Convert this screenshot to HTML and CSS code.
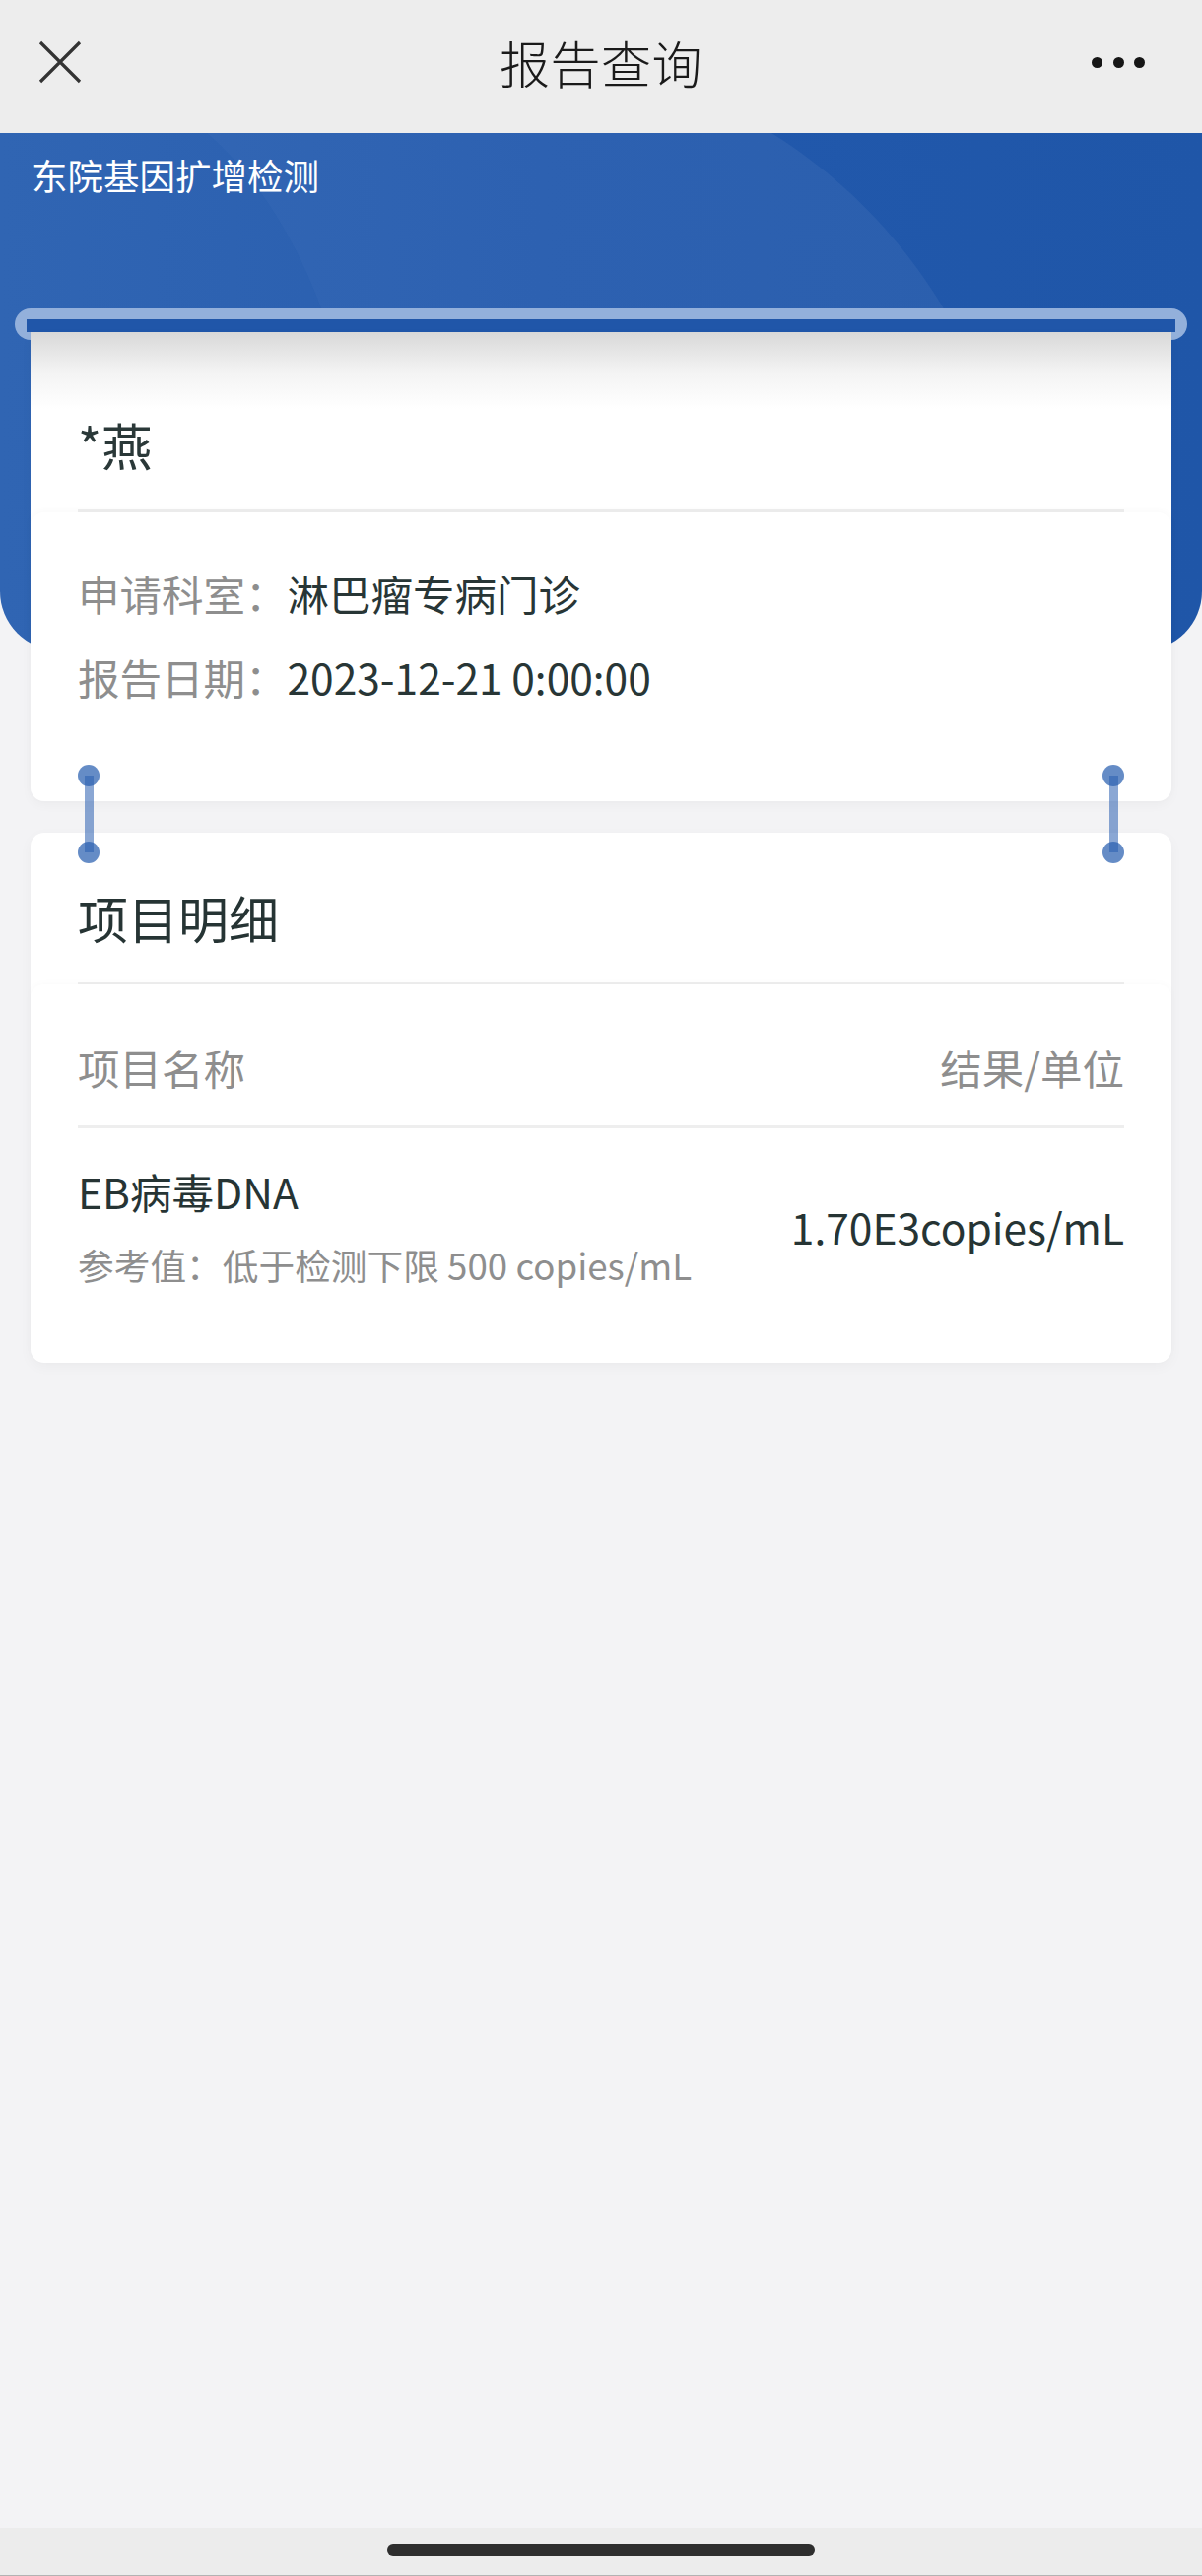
FILE: index.html
```html
<!DOCTYPE html>
<html lang="zh-CN">
<head>
<meta charset="utf-8">
<title>报告查询</title>
<link rel="stylesheet" href="styles.css">
</head>
<body>
<div class="app">
  <header class="navbar">
    <svg class="nav-close" width="44" height="44" viewBox="0 0 44 44" aria-hidden="true">
      <path d="M2 2 L42 42 M42 2 L2 42" stroke="#333" stroke-width="3.2" fill="none"/>
    </svg>
    <h1 class="nav-title">报告查询</h1>
    <div class="nav-more"><span></span><span></span><span></span></div>
  </header>

  <main class="main">
    <section class="hero">
      <svg class="hero-deco" viewBox="0 0 1220 525" preserveAspectRatio="none" aria-hidden="true">
        <path d="M0 0 H210 C300 80 370 220 388 525 H0 Z" fill="#ffffff" fill-opacity="0.035"/>
        <path d="M210 0 C300 80 370 220 388 525 H1062 C1040 300 960 110 783 0 Z" fill="#ffffff" fill-opacity="0.05"/>
        <path d="M240 525 C255 400 290 300 330 230 C362 320 380 420 388 525 Z" fill="#ffffff" fill-opacity="0.045"/>
      </svg>
      <div class="hero-title">东院基因扩增检测</div>
    </section>

    <section class="report">
      <div class="slot"><div class="slot-bar"></div></div>

      <div class="paper">
        <div class="paper-name">*燕</div>
        <div class="paper-info">
          <div class="info-row"><span class="info-label">申请科室：</span><span class="info-value">淋巴瘤专病门诊</span></div>
          <div class="info-row"><span class="info-label">报告日期：</span><span class="info-value">2023-12-21 0:00:00</span></div>
        </div>
      </div>

      <div class="detail">
        <div class="pin pin-left"><i class="pin-line"></i><i class="pin-dot pin-top"></i><i class="pin-dot pin-bottom"></i></div>
        <div class="pin pin-right"><i class="pin-line"></i><i class="pin-dot pin-top"></i><i class="pin-dot pin-bottom"></i></div>

        <div class="detail-title">项目明细</div>
        <div class="detail-body">
          <div class="detail-head">
            <span>项目名称</span>
            <span>结果/单位</span>
          </div>
          <div class="detail-item">
            <div class="item-main">
              <div class="item-name">EB病毒DNA</div>
              <div class="item-ref">参考值：低于检测下限 500 copies/mL</div>
            </div>
            <div class="item-result">1.70E3copies/mL</div>
          </div>
        </div>
      </div>
    </section>
  </main>

  <footer class="homebar"><span class="home-indicator"></span></footer>
</div>
</body>
</html>
```

FILE: styles.css
```css
* { box-sizing: border-box; }

html, body {
  margin: 0;
  padding: 0;
}

body {
  font-family: "Noto Sans CJK SC", "Noto Sans", sans-serif;
  background: #f3f3f5;
  color: #283636;
}

.app {
  display: flex;
  flex-direction: column;
  min-height: 100vh;
}

/* ---------- nav bar ---------- */
.navbar {
  height: 135px;
  background: #ededed;
  display: grid;
  grid-template-columns: 1fr auto 1fr;
  align-items: center;
  padding: 0 39px 9px 39px;
}

.nav-close { display: block; }

.nav-title {
  margin: 0;
  font-size: 51px;
  font-weight: 300;
  line-height: 60px;
  color: #1a1a1a;
  letter-spacing: 0.5px;
}

.nav-more {
  justify-self: end;
  margin-right: 19px;
  display: flex;
  gap: 10.5px;
}
.nav-more span {
  width: 11px;
  height: 11px;
  border-radius: 50%;
  background: #161616;
}

/* ---------- main ---------- */
.main {
  flex: 1;
}

.hero {
  position: relative;
  height: 525px;
  overflow: hidden;
  border-radius: 0 0 60px 60px;
  background: linear-gradient(90deg, #2960b1 0%, #2259ad 45%, #1f56a8 100%);
  padding: 18px 32px 0;
}

.hero-deco {
  position: absolute;
  inset: 0;
  width: 100%;
  height: 100%;
}

.hero-title {
  position: relative;
  font-size: 36.5px;
  line-height: 50px;
  color: #ffffff;
}

.report {
  position: relative;
  margin-top: -347px;
  padding: 0 15px 60px;
}

.slot {
  height: 32px;
  border-radius: 16px;
  background: #93b0db;
  padding: 11px 12px 0;
}
.slot-bar {
  height: 13px;
  background: #2056a9;
}

/* ---------- paper card ---------- */
.paper {
  position: relative;
  margin: -8px 16px 0;
  background: linear-gradient(180deg, #d8d8d8 0px, #f3f3f3 40px, #ffffff 78px);
  border-radius: 0 0 14px 14px;
  box-shadow: 0 4px 12px rgba(0, 0, 0, 0.03);
}

.paper-name {
  margin: 0 48px;
  padding: 84px 0 36px;
  font-size: 51.5px;
  line-height: 60px;
  color: #2a3838;
  border-bottom: 3px solid #eeeeee;
}

.paper-info {
  padding: 52px 48px 96px;
  display: flex;
  flex-direction: column;
  gap: 25px;
  border-radius: 14px;
  box-shadow: 0 -2px 8px rgba(0, 0, 0, 0.025);
}

.info-row {
  font-size: 42.5px;
  line-height: 60px;
  display: flex;
}
.info-label { color: #8e8e8e; }
.info-value { color: #283636; }

/* ---------- detail card ---------- */
.detail {
  position: relative;
  margin: 32px 16px 0;
  background: #ffffff;
  border-radius: 14px;
  box-shadow: 0 4px 14px rgba(0, 0, 0, 0.035);
}

.pin {
  position: absolute;
  top: -69px;
  width: 22px;
  height: 100px;
  z-index: 2;
}
.pin-left { left: 48px; }
.pin-right { right: 48px; }

.pin-line {
  position: absolute;
  left: 6.5px;
  top: 11px;
  width: 9px;
  height: 78px;
  background: rgba(42, 95, 176, 0.55);
}
.pin-dot {
  position: absolute;
  left: 0;
  width: 22px;
  height: 22px;
  border-radius: 50%;
  background: rgba(42, 95, 176, 0.72);
}
.pin-top { top: 0; }
.pin-bottom { bottom: 0; }

.detail-title {
  margin: 0 48px;
  padding: 51px 0 30px;
  font-size: 51px;
  line-height: 70px;
  font-weight: 400;
  color: #263434;
  border-bottom: 3px solid #eeeeee;
}

.detail-body {
  padding: 0 48px;
  border-radius: 14px;
  box-shadow: 0 -2px 8px rgba(0, 0, 0, 0.02);
}

.detail-head {
  display: flex;
  justify-content: space-between;
  padding: 54px 0 29px;
  font-size: 42.5px;
  line-height: 60px;
  color: #8e8e8e;
  border-bottom: 3px solid #eeeeee;
}

.detail-item {
  display: flex;
  justify-content: space-between;
  align-items: center;
  padding: 36px 0 75px;
}

.item-main {
  display: flex;
  flex-direction: column;
  gap: 21px;
}

.item-name {
  font-size: 42.5px;
  line-height: 56px;
  color: #263434;
}

.item-ref {
  font-size: 36.7px;
  line-height: 50px;
  color: #8e8e8e;
}

.item-result {
  font-size: 42.5px;
  line-height: 56px;
  color: #263434;
}

/* ---------- home indicator ---------- */
.homebar {
  height: 49px;
  background: #ececec;
  display: flex;
  justify-content: center;
  padding-top: 17px;
  border-bottom: 1px solid #b3b3b3;
}
.home-indicator {
  width: 434px;
  height: 12px;
  border-radius: 6px;
  background: #2e2e2e;
}
```
